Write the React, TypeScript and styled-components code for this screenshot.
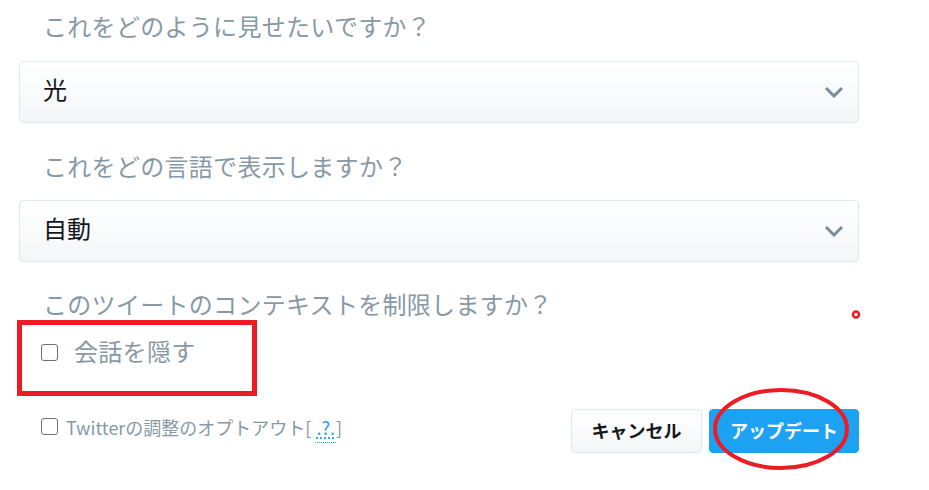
import React from "react";
import styled, { createGlobalStyle } from "styled-components";

const Global = createGlobalStyle`
  html, body { margin: 0; padding: 0; background: #ffffff; }
  body { font-family: "Noto Sans CJK JP", "Noto Sans", sans-serif; }
  * { box-sizing: border-box; }
`;

const Page = styled.div`
  width: 929px;
  height: 490px;
  position: relative;
  overflow: hidden;
  padding: 9px 0 0 19px;
`;

const Form = styled.div`
  width: 840px;
  display: flex;
  flex-direction: column;
`;

const Label = styled.div<{ $top: number }>`
  margin-top: ${(p) => p.$top}px;
  padding-left: 24px;
  font-size: 24px;
  letter-spacing: 0.3px;
  line-height: 34px;
  height: 34px;
  color: #8899a6;
  white-space: nowrap;
`;

const Select = styled.div<{ $top: number }>`
  margin-top: ${(p) => p.$top}px;
  height: 62px;
  border: 1px solid #e1e8ed;
  border-radius: 4px;
  background: linear-gradient(#ffffff, #f3f6f8);
  display: flex;
  align-items: center;
  justify-content: space-between;
  padding: 0 14px 0 23px;
  font-size: 24px;
  color: #14171a;
`;

const Value = styled.span`
  line-height: 34px;
  margin-top: -7px;
`;

const Chevron = () => (
  <svg width="20" height="12" viewBox="0 0 20 12">
    <polyline
      points="2,2 10,10 18,2"
      fill="none"
      stroke="#7b8d9b"
      strokeWidth="3"
      strokeLinejoin="miter"
    />
  </svg>
);

const HideRow = styled.div`
  position: relative;
  height: 76px;
  display: flex;
  align-items: center;
  padding: 0 0 14px 22px;
  gap: 16px;
`;

const Annotation = styled.div`
  position: absolute;
  left: -2px;
  top: -1px;
  width: 240px;
  height: 76px;
  border: 5px solid #ed1c24;
  pointer-events: none;
`;

const Box = styled.span`
  display: inline-block;
  width: 17px;
  height: 17px;
  border: 1.6px solid #707070;
  border-radius: 3px;
  background: #fff;
  flex: none;
`;

const BigText = styled.span`
  font-size: 24px;
  letter-spacing: 0.3px;
  line-height: 34px;
  color: #8899a6;
  margin-top: -2px;
`;

const Footer = styled.div`
  margin-top: 12px;
  display: flex;
  align-items: center;
  justify-content: space-between;
`;

const OptOut = styled.div`
  display: flex;
  align-items: center;
  gap: 8px;
  padding-left: 22px;
  margin-top: -9px;
`;

const SmallText = styled.span`
  font-size: 18px;
  line-height: 24px;
  color: #8899a6;
  white-space: nowrap;
  margin-top: 1px;
`;

const Help = styled.span`
  color: #1da1f2;
  text-decoration: underline dotted;
  text-underline-offset: 3px;
  border-bottom: 1px dotted #1da1f2;
  padding: 0 1px 2px;
`;

const Buttons = styled.div`
  display: flex;
  gap: 7px;
  position: relative;
`;

const Button = styled.button<{ $primary?: boolean }>`
  height: 44px;
  padding: 0 0 2px;
  width: ${(p) => (p.$primary ? 150 : 131)}px;
  border-radius: 4px;
  font-family: "Noto Sans CJK JP", "Noto Sans", sans-serif;
  font-size: 18px;
  font-weight: 700;
  cursor: pointer;
  border: 1px solid ${(p) => (p.$primary ? "#1da1f2" : "#e1e8ed")};
  background: ${(p) =>
    p.$primary ? "#1da1f2" : "linear-gradient(#ffffff, #f3f6f8)"};
  color: ${(p) => (p.$primary ? "#ffffff" : "#14171a")};
`;

const Ellipse = styled.svg`
  position: absolute;
  left: 138px;
  top: -23px;
  pointer-events: none;
  overflow: visible;
`;

const Dot = styled.svg`
  position: absolute;
  left: 850px;
  top: 309px;
  pointer-events: none;
`;

export default function App() {
  return (
    <>
      <Global />
      <Page>
        <Form>
          <Label $top={0}>これをどのように見せたいですか？</Label>
          <Select $top={18}>
            <Value>光</Value>
            <Chevron />
          </Select>
          <Label $top={26}>これをどの言語で表示しますか？</Label>
          <Select $top={17}>
            <Value>自動</Value>
            <Chevron />
          </Select>
          <Label $top={25}>このツイートのコンテキストを制限しますか？</Label>
          <HideRow>
            <Box />
            <BigText>会話を隠す</BigText>
            <Annotation />
          </HideRow>
          <Footer>
            <OptOut>
              <Box />
              <SmallText>
                Twitterの調整のオプトアウト[ <Help>.?.</Help>]
              </SmallText>
            </OptOut>
            <Buttons>
              <Button>キャンセル</Button>
              <Button $primary>アップデート</Button>
              <Ellipse width="140" height="84" viewBox="0 0 140 84">
                <ellipse
                  cx="72"
                  cy="43"
                  rx="66"
                  ry="39"
                  fill="none"
                  stroke="#ed1c24"
                  strokeWidth="4"
                />
              </Ellipse>
            </Buttons>
          </Footer>
        </Form>
        <Dot width="12" height="12" viewBox="0 0 12 12">
          <circle cx="6" cy="5.5" r="3" fill="none" stroke="#ed1c24" strokeWidth="2.5" />
        </Dot>
      </Page>
    </>
  );
}
